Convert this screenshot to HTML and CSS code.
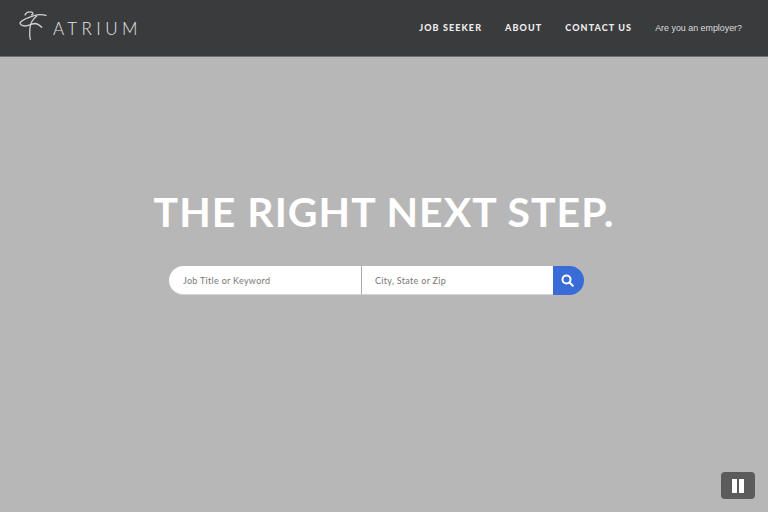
FILE: index.html
```html
<!DOCTYPE html>
<html lang="en">
<head>
  <meta charset="UTF-8">
  <meta name="viewport" content="width=device-width, initial-scale=1.0">
  <title>Atrium</title>
  <link rel="stylesheet" href="styles.css">
</head>
<body>
  <header class="topbar">
    <a class="logo" href="#">
      <svg class="logo-mark" width="30" height="30" viewBox="0 0 30 30" fill="none" stroke="#d0d0d0" stroke-width="1.300" stroke-linecap="round">
        <path d="M6 4C6.800 2 8.500 .8 10.500 .8C12.500 .8 14.300 1.500 14 2.700C13.800 3.600 13 4 12.400 3.900"/>
        <path d="M17.700 5C14 8 11.500 12 11 16.500C10.600 21 10.400 25 11.300 28.300"/>
        <path d="M27 4.400C23 3.400 19 3.400 15 4.600C10 6.200 3 9.500 1.200 11.500C.6 13 2.500 14.800 6 15C9.500 15.100 13 12.500 16 12.500C18.500 12.600 20.800 14.500 22.700 16.300"/>
      </svg>
      <span class="logo-text">ATRIUM</span>
    </a>
    <nav class="nav">
      <a href="#">JOB SEEKER</a>
      <a href="#">ABOUT</a>
      <a href="#">CONTACT US</a>
      <a class="employer" href="#">Are you an employer?</a>
    </nav>
  </header>

  <main class="hero">
    <h1>THE RIGHT NEXT STEP.</h1>
    <form class="search">
      <input class="field" type="text" placeholder="Job Title or Keyword">
      <input class="field" type="text" placeholder="City, State or Zip">
      <button class="search-btn" type="button" aria-label="Search">
        <svg width="13" height="13" viewBox="0 0 13 13" fill="none" stroke="#fff" stroke-width="2" stroke-linecap="round">
          <circle cx="5.500" cy="5.500" r="4"/>
          <path d="M8.500 8.500L11.800 11.800"/>
        </svg>
      </button>
    </form>
  </main>

  <button class="pause" type="button" aria-label="Pause">
    <span></span>
    <span></span>
  </button>
</body>
</html>
```

FILE: styles.css
```css
html, body {
  height: 100%;
}
body {
  margin: 0;
  display: flex;
  flex-direction: column;
  background-color: #b7b7b7;
  font-family: Lato, sans-serif;
  overflow: hidden;
}
a {
  text-decoration: none;
}
.topbar {
  height: 57px;
  flex: none;
  box-sizing: border-box;
  display: flex;
  align-items: center;
  justify-content: space-between;
  padding: 0 26px 0 19px;
  background-color: #3a3b3d;
  border-bottom: 1px solid #6f6f6f;
}
.logo {
  display: flex;
  align-items: flex-start;
  margin-top: -4px;
}
.logo-mark {
  display: block;
}
.logo-text {
  margin: 8px 0 0 4px;
  font-size: 17px;
  line-height: 20px;
  font-weight: 300;
  letter-spacing: 4.400px;
  color: #e6e6e6;
}
.nav {
  display: flex;
  align-items: center;
  gap: 23px;
  margin-top: -1px;
}
.nav a {
  font-size: 9px;
  font-weight: 900;
  letter-spacing: 1.100px;
  color: #ececec;
}
.nav .employer {
  font-family: "Liberation Sans", Arial, sans-serif;
  font-size: 8.900px;
  font-weight: 400;
  letter-spacing: 0;
  color: #dddddd;
}
.hero {
  flex: 1;
  display: flex;
  flex-direction: column;
  align-items: center;
  padding-top: 130px;
}
.hero h1 {
  margin: 0;
  font-size: 41px;
  line-height: 50px;
  font-weight: 700;
  letter-spacing: 1px;
  color: #fff;
}
.search {
  display: flex;
  width: 415px;
  height: 29px;
  margin-top: 29px;
  margin-right: 15px;
}
.field {
  width: 193px;
  box-sizing: border-box;
  padding: 0 13px 0 14px;
  border: none;
  border-right: 1px solid #a9a9a9;
  border-bottom: 1px solid #d5d5d5;
  background-color: #fff;
  font-family: Lato, sans-serif;
  font-size: 9px;
  letter-spacing: 0.300px;
  outline: none;
}
.field::placeholder {
  color: #777;
  opacity: 1;
}
.field:first-child {
  border-radius: 15px 0 0 15px;
}
.field:nth-child(2) {
  width: 191px;
  padding-left: 13px;
  border-right: none;
}
.search-btn {
  width: 31px;
  padding: 0 2px 0 0;
  border: none;
  border-radius: 0 15px 15px 0;
  background-color: #3a6cd7;
  display: flex;
  align-items: center;
  justify-content: center;
}
.pause {
  position: absolute;
  right: 13px;
  bottom: 13px;
  width: 34px;
  height: 27px;
  padding: 0;
  border: none;
  border-radius: 4px;
  background-color: #5b5b5b;
  display: flex;
  align-items: center;
  justify-content: center;
  gap: 2px;
}
.pause span {
  width: 5px;
  height: 14px;
  background-color: #fff;
}
```
